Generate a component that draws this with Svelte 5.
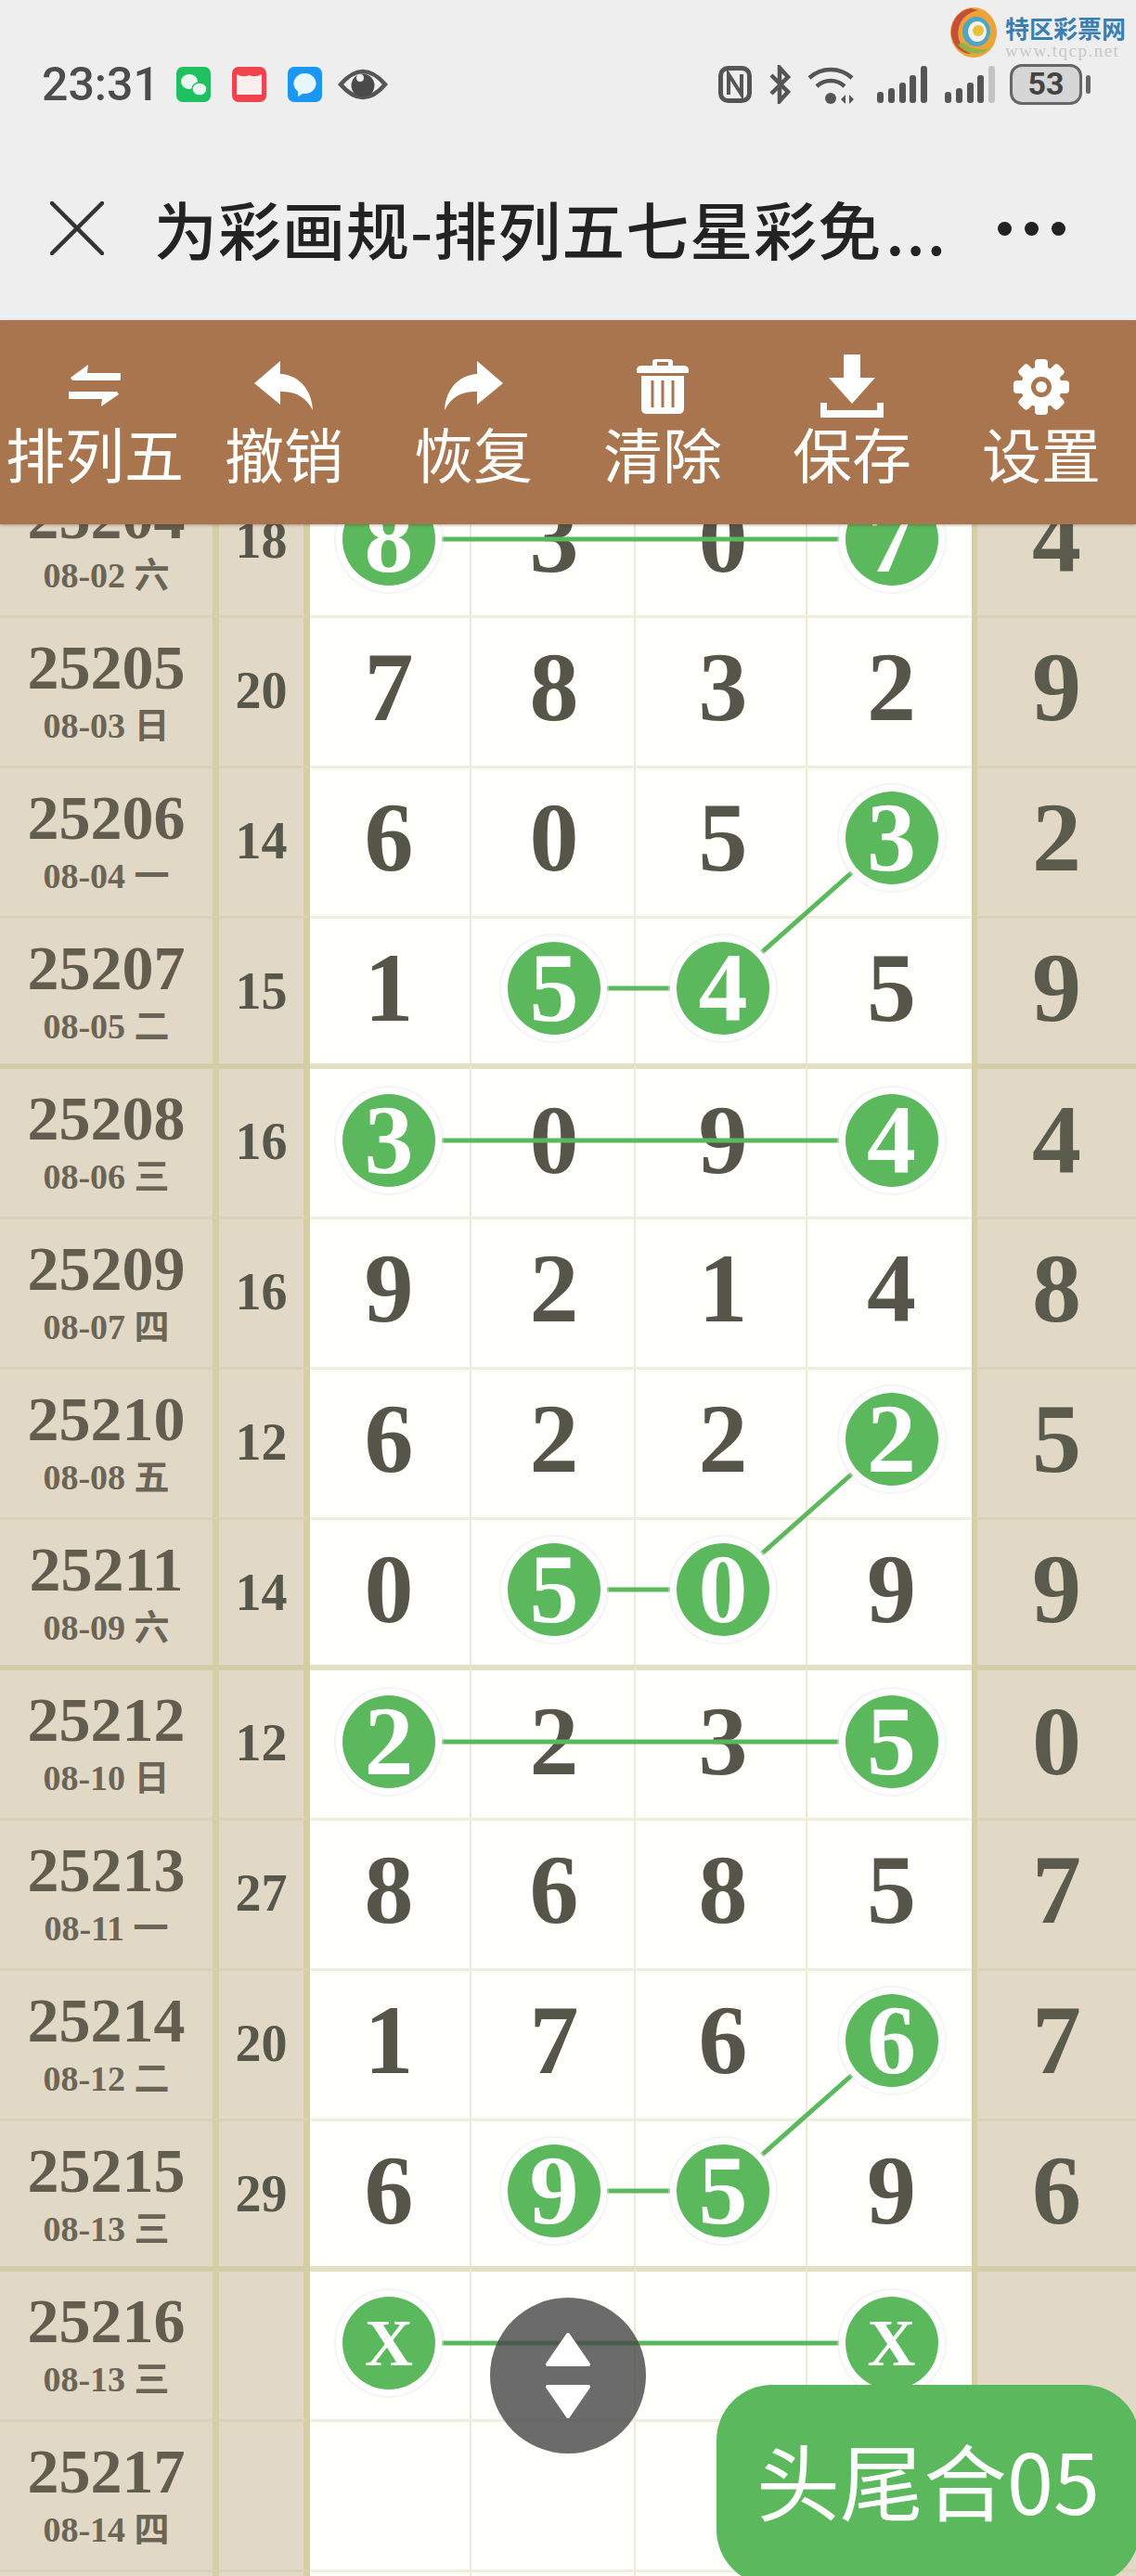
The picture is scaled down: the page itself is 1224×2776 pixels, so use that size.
<script>
  // [period, date, sum, five numbers, circled columns]
  const rows = [
    ["25204", "08-02 六", "18", ["8", "3", "0", "7", "4"], [0, 3]],
    ["25205", "08-03 日", "20", ["7", "8", "3", "2", "9"], []],
    ["25206", "08-04 一", "14", ["6", "0", "5", "3", "2"], [3]],
    ["25207", "08-05 二", "15", ["1", "5", "4", "5", "9"], [1, 2]],
    ["25208", "08-06 三", "16", ["3", "0", "9", "4", "4"], [0, 3]],
    ["25209", "08-07 四", "16", ["9", "2", "1", "4", "8"], []],
    ["25210", "08-08 五", "12", ["6", "2", "2", "2", "5"], [3]],
    ["25211", "08-09 六", "14", ["0", "5", "0", "9", "9"], [1, 2]],
    ["25212", "08-10 日", "12", ["2", "2", "3", "5", "0"], [0, 3]],
    ["25213", "08-11 一", "27", ["8", "6", "8", "5", "7"], []],
    ["25214", "08-12 二", "20", ["1", "7", "6", "6", "7"], [3]],
    ["25215", "08-13 三", "29", ["6", "9", "5", "9", "6"], [1, 2]],
    ["25216", "08-13 三", "", ["X", "", "", "X", ""], [0, 3]],
    ["25217", "08-14 四", "", ["", "", "", "", ""], []],
    ["", "", "", ["", "", "", "", ""], []]
  ];

  const colX = [419, 597, 777, 960];
  const pt = (r, c) => `${colX[c]},${r * 162 + (r % 4 === 0 ? 80 : 78)}`;
  const links = [
    [[0, 0], [0, 3]],
    [[2, 3], [3, 2], [3, 1]],
    [[4, 0], [4, 3]],
    [[6, 3], [7, 2], [7, 1]],
    [[8, 0], [8, 3]],
    [[10, 3], [11, 2], [11, 1]],
    [[12, 0], [12, 3]]
  ].map((l) => l.map(([r, c]) => pt(r, c)).join(" "));

  const tools = ["排列五", "撤销", "恢复", "清除", "保存", "设置"];
  const teeth = [0, 45, 90, 135, 180, 225, 270, 315];
</script>

<div class="page">
  <header class="top">
    <div class="status">
      <div class="status-left">
        <span class="time">23:31</span>
        <svg class="app-icon" viewBox="0 0 37 38">
          <rect width="37" height="38" rx="7" fill="#1fc060" />
          <ellipse cx="14" cy="16" rx="9" ry="8" fill="#e8f8ee" />
          <ellipse cx="25" cy="24" rx="8" ry="7" fill="#e8f8ee" stroke="#1fc060" stroke-width="1.5" />
        </svg>
        <svg class="app-icon" viewBox="0 0 37 38">
          <rect width="37" height="38" rx="7" fill="#f0444c" />
          <path d="M5 8 Q12 12 18.500 9 Q25 12 32 8 V30 H5 Z" fill="#fbeeee" />
        </svg>
        <svg class="app-icon" viewBox="0 0 37 38">
          <rect width="37" height="38" rx="7" fill="#1a96f5" />
          <ellipse cx="18.500" cy="18" rx="12" ry="11" fill="#e6f6fd" />
          <path d="M11 25 L11 32 L18 28 Z" fill="#e6f6fd" />
        </svg>
        <svg class="eye" viewBox="0 0 54 40">
          <path d="M3 20 Q27 -8 51 20 Q27 48 3 20 Z" fill="none" stroke="#555" stroke-width="4.500" />
          <circle cx="27" cy="21" r="12.500" fill="#4a4a4a" />
          <circle cx="24" cy="13" r="4" fill="#eee" />
        </svg>
      </div>
      <div class="status-right">
        <svg class="nfc" viewBox="0 0 36 40">
          <rect x="2.500" y="2.500" width="31" height="35" rx="8" fill="none" stroke="#555" stroke-width="5" />
          <path d="M11 31 V9 L25 31 V9" fill="none" stroke="#555" stroke-width="4" />
        </svg>
        <svg class="bt" viewBox="0 0 24 42">
          <path d="M3 11 L21 29 L12 39 V3 L21 13 L3 31" fill="none" stroke="#555" stroke-width="4.500" />
        </svg>
        <svg class="wifi" viewBox="0 0 54 44">
          <path d="M3 15 A34 34 0 0 1 49 15" fill="none" stroke="#555" stroke-width="4.500" />
          <path d="M11 24 A22 22 0 0 1 41 24" fill="none" stroke="#555" stroke-width="4.500" />
          <circle cx="26" cy="37" r="6" fill="#555" />
          <path d="M37 38 L42 33 V43 Z M46 33 L51 38 L46 43 Z" fill="#555" />
        </svg>
        <svg class="signal" viewBox="0 0 54 40">
          <rect x="0" y="28" width="7" height="12" rx="3" fill="#555" />
          <rect x="12" y="24" width="7" height="16" rx="3" fill="#555" />
          <rect x="24" y="18" width="7" height="22" rx="3" fill="#555" />
          <rect x="35" y="10" width="7" height="30" rx="3" fill="#555" />
          <rect x="47" y="0" width="7" height="40" rx="3" fill="#555" />
        </svg>
        <svg class="signal" viewBox="0 0 54 40">
          <rect x="0" y="28" width="7" height="12" rx="3" fill="#555" />
          <rect x="12" y="24" width="7" height="16" rx="3" fill="#555" />
          <rect x="24" y="18" width="7" height="22" rx="3" fill="#555" />
          <rect x="35" y="10" width="7" height="30" rx="3" fill="#555" />
          <rect x="47" y="0" width="7" height="40" rx="3" fill="#c4c4c4" />
        </svg>
        <div class="battery"><span>53</span></div>
      </div>
    </div>

    <div class="titlebar">
      <svg class="close" viewBox="0 0 58 58">
        <path d="M2 2 L56 56 M56 2 L2 56" stroke="#333" stroke-width="4.500" stroke-linecap="round" />
      </svg>
      <div class="title">为彩画规-排列五七星彩免<span class="more">...</span></div>
      <div class="dots"><i></i><i></i><i></i></div>
    </div>

    <div class="logo">
      <svg class="swirl" viewBox="0 0 50 54">
        <ellipse cx="25" cy="27" rx="25" ry="27" fill="#eda33a" />
        <path d="M22 1 C6 4 0 18 1 30 C3 42 12 50 22 50 C12 44 6 34 9 22 C11 12 18 6 30 3 Z" fill="#c24f38" />
        <path d="M8 40 C16 50 32 54 42 44 C34 46 22 46 14 38 Z" fill="#8fb54a" />
        <ellipse cx="28" cy="26" rx="15" ry="16" fill="#4da6c4" />
        <ellipse cx="29" cy="26" rx="10" ry="11" fill="#f2f2ec" />
        <circle cx="30" cy="25" r="6" fill="#e6c23a" />
      </svg>
      <div class="logo-text">
        <div class="logo-name">特区彩票网</div>
        <div class="logo-url">www.tqcp.net</div>
      </div>
    </div>
  </header>
  <div class="stripe"></div>

  <main class="board">
    <nav class="toolbar">
      {#each tools as tool, i}
        <div class="tool">
          <svg class="tool-icon" viewBox="0 0 70 70">
            {#if i === 0}
              <path d="M9 26 L28 12 L27 21 H63 V29 H11 Z" fill="#fff" />
              <path d="M61 44 L42 57 L43 49 H7 V41 H59 Z" fill="#fff" />
            {:else if i === 1}
              <path d="M3 32 L31 8 V22 C52 23 65 40 66 61 C58 46 47 41 31 41 V55 Z" fill="#fff" />
            {:else if i === 2}
              <path d="M67 32 L39 8 V22 C18 23 5 40 4 61 C12 46 23 41 39 41 V55 Z" fill="#fff" />
            {:else if i === 3}
              <path d="M7 18 Q7 13 13 13 H24 V9 Q24 6 28 6 H42 Q46 6 46 9 V13 H57 Q63 13 63 18 V21 H7 Z M29 9 V13 H41 V9 Z" fill="#fff" fill-rule="evenodd" />
              <path d="M12 24 H58 V59 Q58 65 52 65 H18 Q12 65 12 59 Z" fill="#fff" />
              <path d="M24 29 V58 M35 29 V58 M46 29 V58" stroke="#a8754e" stroke-width="3" />
            {:else if i === 4}
              <path d="M26 1 H44 V26 H60 L35 54 L10 26 H26 Z" fill="#fff" />
              <path d="M1 53 H8 V61 H62 V53 H69 V69 H1 Z" fill="#fff" />
            {:else}
              <g transform="translate(35 36)">
                {#each teeth as a}
                  <rect x="-7" y="-30" width="14" height="14" rx="4" fill="#fff" transform="rotate({a})" />
                {/each}
                <circle r="22" fill="#fff" />
                <circle r="11" fill="#a8754e" />
                <circle r="6" fill="#fff" />
              </g>
            {/if}
          </svg>
          <span class="tool-label">{tool}</span>
        </div>
      {/each}
    </nav>

    <div class="grid">
      {#each rows as [id, date, sum, nums, marks], r}
        <div class="row" class:thick={r % 4 === 0}>
          <div class="cell side label">
            <div class="period">{id}</div>
            <div class="date">{date}</div>
          </div>
          <div class="cell side sum">{sum}</div>
          {#each nums.slice(0, 4) as n, c}
            <div class="cell num">
              {#if marks.includes(c)}
                <span class="ball" class:letter={n === "X"}>{n}</span>
              {:else}
                {n}
              {/if}
            </div>
          {/each}
          <div class="cell side num">{nums[4]}</div>
        </div>
      {/each}

      <svg class="links" width="1224" height="2300">
        {#each links as points}
          <polyline {points} />
        {/each}
      </svg>
    </div>

    <button class="scroller" aria-label="scroll">
      <svg viewBox="0 0 60 100" width="60" height="100">
        <path d="M30 6 L8 38 H52 Z M8 62 H52 L30 94 Z" fill="#fff" stroke="#fff" stroke-width="4" stroke-linejoin="round" />
      </svg>
    </button>
    <div class="result">头尾合05</div>
  </main>
</div>

<style>
  :global(body) {
    margin: 0;
    background: #fff;
  }

  .page {
    position: relative;
    width: 1224px;
    height: 2776px;
    overflow: hidden;
    font-family: "Noto Sans CJK SC", sans-serif;
  }

  .top {
    position: relative;
    box-sizing: border-box;
    height: 336px;
    padding-top: 70px;
    background: #eeeeee;
  }

  .stripe {
    height: 9px;
    background: #e9f0f4;
  }

  .status {
    display: flex;
    justify-content: space-between;
    align-items: center;
    height: 42px;
    padding: 0 49px 0 45px;
  }

  .status-left,
  .status-right {
    display: flex;
    align-items: center;
  }

  .time {
    width: 145px;
    font-family: Roboto, sans-serif;
    font-size: 50px;
    font-weight: 500;
    line-height: 42px;
    color: #4c4c4c;
  }

  .app-icon {
    width: 37px;
    height: 38px;
    margin-right: 23px;
  }

  .eye {
    width: 54px;
    height: 40px;
    margin-left: -6px;
  }

  .nfc {
    width: 36px;
    height: 40px;
    margin-right: 18px;
  }

  .bt {
    width: 24px;
    height: 42px;
    margin-right: 17px;
  }

  .wifi {
    width: 54px;
    height: 44px;
    margin-right: 22px;
  }

  .signal {
    width: 54px;
    height: 40px;
    margin-right: 19px;
  }

  .battery {
    position: relative;
    box-sizing: border-box;
    width: 78px;
    height: 44px;
    margin-left: -3px;
    margin-right: 9px;
    border: 3px solid #666;
    border-radius: 13px;
    background: #d6d6d6;
    text-align: center;
    font-family: Roboto, sans-serif;
    font-size: 34px;
    font-weight: 700;
    line-height: 37px;
    color: #444;
  }

  .battery::after {
    content: "";
    position: absolute;
    top: 9px;
    right: -12px;
    width: 5px;
    height: 20px;
    border-radius: 3px;
    background: #666;
  }

  .titlebar {
    display: flex;
    align-items: center;
    height: 84px;
    margin-top: 92px;
    padding-left: 54px;
  }

  .close {
    width: 58px;
    height: 58px;
    margin-right: 54px;
  }

  .title {
    width: 909px;
    font-size: 68px;
    font-weight: 500;
    line-height: 84px;
    letter-spacing: 1px;
    color: #232323;
    white-space: nowrap;
  }

  .more {
    margin-left: 4px;
    letter-spacing: 2px;
  }

  .dots {
    display: flex;
    gap: 14px;
  }

  .dots i {
    width: 15px;
    height: 15px;
    border-radius: 50%;
    background: #222;
  }

  /* site watermark, sits over the status bar */
  .logo {
    position: absolute;
    top: 8px;
    left: 1024px;
    display: flex;
    gap: 9px;
  }

  .swirl {
    width: 50px;
    height: 54px;
  }

  .logo-text {
    width: 134px;
    padding-top: 6px;
  }

  .logo-name {
    font-size: 26px;
    font-weight: 700;
    line-height: 32px;
    color: #3a7fb2;
    white-space: nowrap;
  }

  .logo-url {
    font-family: "Liberation Serif", serif;
    font-size: 19px;
    line-height: 18px;
    letter-spacing: 1.500px;
    color: #c8c8c8;
    white-space: nowrap;
  }

  .board {
    position: relative;
    padding-top: 156px;
  }

  .toolbar {
    position: absolute;
    top: 0;
    left: 0;
    z-index: 5;
    display: flex;
    width: 100%;
    height: 220px;
    background: #a8754e;
    box-shadow: 0 1px 3px rgba(60, 40, 20, 0.35);
  }

  .tool {
    display: flex;
    flex: 1;
    flex-direction: column;
    align-items: center;
    padding-top: 36px;
  }

  .tool-icon {
    width: 70px;
    height: 70px;
  }

  .tool-label {
    margin-top: -4px;
    font-size: 64px;
    line-height: 80px;
    color: #fff;
    white-space: nowrap;
  }

  .grid {
    position: relative;
    display: flow-root;
  }

  .row {
    display: grid;
    grid-template-columns: 236px 98px 174px 177px 185px 177px 177px;
    height: 162px;
  }

  .row.thick {
    height: 165px;
    margin-top: -3px;
  }

  .cell {
    box-sizing: border-box;
    display: flex;
    align-items: center;
    justify-content: center;
    border-top: 3px solid rgba(197, 188, 134, 0.25);
    border-right: 2px solid #ecead9;
    padding-bottom: 9px;
    background: #fffffc;
  }

  .thick .cell {
    border-top: 6px solid rgba(197, 188, 134, 0.48);
    padding-bottom: 5px;
  }

  .side {
    background: #e2d8c6;
    border-right: none;
  }

  .label {
    flex-direction: column;
    padding: 4px 0 0;
    border-right: 7px solid #d5cfa5;
  }

  .thick .label {
    padding: 4px 0 0;
  }

  .period {
    font-family: "Liberation Serif", serif;
    font-size: 68px;
    font-weight: 700;
    line-height: 68px;
    color: #625d4e;
  }

  .date {
    font-family: "Liberation Serif", "Noto Sans CJK SC", serif;
    font-size: 38px;
    font-weight: 700;
    line-height: 58px;
    color: #6a6556;
    white-space: nowrap;
  }

  .sum {
    padding: 0 0 4px;
    border-right: 7px solid #d5cfa5;
    font-family: "Liberation Serif", serif;
    font-size: 56px;
    font-weight: 700;
    color: #57574b;
  }

  .thick .sum {
    padding: 0 0 4px;
  }

  .num {
    font-family: "Liberation Serif", serif;
    font-size: 106px;
    font-weight: 700;
    line-height: 1;
    color: #55554a;
  }

  .row .num:nth-child(3) {
    padding-right: 2px;
  }

  .row .num:nth-child(4) {
    padding-left: 3px;
  }

  .row .num:nth-child(5) {
    padding-left: 5px;
  }

  .row .num:nth-child(6) {
    padding-left: 4px;
    border-right: none;
  }

  .row .num:nth-child(7) {
    border-left: 6px solid #d5cfa5;
    color: #5b5b4d;
  }

  .ball {
    position: relative;
    z-index: 2;
    display: flex;
    flex: none;
    align-items: center;
    justify-content: center;
    width: 100px;
    height: 100px;
    border-radius: 50%;
    background: #5cb85c;
    box-shadow: 0 0 0 7px #fff, 0 0 0 9px rgba(238, 232, 244, 0.5);
    color: #fff;
  }

  .ball.letter {
    font-size: 72px;
  }

  /* connecting lines run over the plain digits and under the balls */
  .links {
    position: absolute;
    top: 0;
    left: 0;
    z-index: 1;
    overflow: visible;
    pointer-events: none;
  }

  .links polyline {
    fill: none;
    stroke: #5cb85c;
    stroke-width: 5;
  }

  .scroller {
    position: absolute;
    top: 2131px;
    left: 528px;
    z-index: 4;
    display: flex;
    align-items: center;
    justify-content: center;
    width: 168px;
    height: 168px;
    padding: 0;
    border: none;
    border-radius: 50%;
    background: rgba(70, 70, 70, 0.8);
  }

  .result {
    position: absolute;
    top: 2225px;
    left: 772px;
    z-index: 4;
    box-sizing: border-box;
    display: flex;
    align-items: center;
    justify-content: center;
    width: 456px;
    height: 216px;
    padding-bottom: 14px;
    border-radius: 60px;
    background: #5cb85c;
    font-size: 90px;
    line-height: 1;
    color: #fff;
    white-space: nowrap;
  }
</style>
